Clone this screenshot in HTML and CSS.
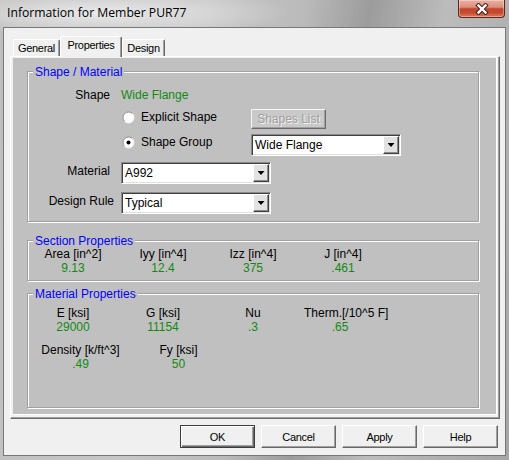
FILE: index.html
```html
<!DOCTYPE html>
<html>
<head>
<meta charset="utf-8">
<title>Information for Member PUR77</title>
<link rel="stylesheet" href="styles.css">
</head>
<body>
<div class="window">
  <div class="titlebar">
    <div class="caption">Information for Member PUR77</div>
    <div class="close">
      <svg width="14" height="12" viewBox="0 0 14 12">
        <path d="M3.5 2.5 L10.5 9.5 M10.5 2.5 L3.5 9.5" stroke="#3b2320" stroke-width="4.4" stroke-linecap="square" fill="none"/>
        <path d="M3.5 2.5 L10.5 9.5 M10.5 2.5 L3.5 9.5" stroke="#ffffff" stroke-width="2.4" stroke-linecap="square" fill="none"/>
      </svg>
    </div>
  </div>
  <div class="client">
    <div class="tabs">
      <div class="tab t-general">General</div>
      <div class="tab t-props active">Properties</div>
      <div class="tab t-design">Design</div>
    </div>
    <div class="panel">
      <div class="page">
        <div class="group g-shape">
          <span class="legend">Shape / Material</span>
          <div class="row r-shape">
            <span class="lbl">Shape</span>
            <span class="val">Wide Flange</span>
          </div>
          <div class="row r-explicit">
            <div class="opt">
              <svg class="radio" width="13" height="13" viewBox="0 0 13 13">
                <circle cx="6.5" cy="6.5" r="5.5" fill="#fff"/>
                <path d="M2.61 10.39 A5.5 5.5 0 0 1 10.39 2.61" stroke="#8c8c8c" fill="none"/>
                <path d="M10.39 2.61 A5.5 5.5 0 0 1 2.61 10.39" stroke="#f4f4f4" fill="none"/>
              </svg>
              <span>Explicit Shape</span>
            </div>
            <button class="btn-dis" type="button">Shapes List</button>
          </div>
          <div class="row r-group">
            <div class="opt">
              <svg class="radio" width="13" height="13" viewBox="0 0 13 13">
                <circle cx="6.5" cy="6.5" r="5.5" fill="#fff"/>
                <path d="M2.61 10.39 A5.5 5.5 0 0 1 10.39 2.61" stroke="#8c8c8c" fill="none"/>
                <path d="M10.39 2.61 A5.5 5.5 0 0 1 2.61 10.39" stroke="#f4f4f4" fill="none"/>
                <circle cx="6.5" cy="6.5" r="2" fill="#000"/>
              </svg>
              <span>Shape Group</span>
            </div>
            <div class="combo">
              <span class="ctext">Wide Flange</span>
              <span class="ddbtn"></span>
            </div>
          </div>
          <div class="row r-material">
            <span class="lbl">Material</span>
            <div class="combo">
              <span class="ctext">A992</span>
              <span class="ddbtn"></span>
            </div>
          </div>
          <div class="row r-rule">
            <span class="lbl wide">Design Rule</span>
            <div class="combo">
              <span class="ctext">Typical</span>
              <span class="ddbtn"></span>
            </div>
          </div>
        </div>

        <div class="group g-sect">
          <span class="legend">Section Properties</span>
          <div class="props p-sect">
            <div class="cell"><div class="plbl">Area [in^2]</div><div class="pval">9.13</div></div>
            <div class="cell"><div class="plbl">Iyy [in^4]</div><div class="pval">12.4</div></div>
            <div class="cell"><div class="plbl">Izz [in^4]</div><div class="pval">375</div></div>
            <div class="cell"><div class="plbl">J [in^4]</div><div class="pval">.461</div></div>
          </div>
        </div>

        <div class="group g-mat">
          <span class="legend">Material Properties</span>
          <div class="props p-mat1">
            <div class="cell"><div class="plbl">E [ksi]</div><div class="pval">29000</div></div>
            <div class="cell"><div class="plbl">G [ksi]</div><div class="pval">11154</div></div>
            <div class="cell"><div class="plbl">Nu</div><div class="pval">.3</div></div>
            <div class="cell therm"><div class="plbl">Therm.[/10^5 F]</div><div class="pval">.65</div></div>
          </div>
          <div class="props p-mat2">
            <div class="cell"><div class="plbl">Density [k/ft^3]</div><div class="pval">.49</div></div>
            <div class="cell"><div class="plbl">Fy [ksi]</div><div class="pval">50</div></div>
          </div>
        </div>
      </div>
    </div>
    <div class="buttons">
      <button class="btn default" type="button">OK</button>
      <button class="btn" type="button">Cancel</button>
      <button class="btn" type="button">Apply</button>
      <button class="btn" type="button">Help</button>
    </div>
  </div>
</div>
</body>
</html>
```

FILE: styles.css
```css
* { box-sizing: border-box; }

body {
  margin: 0;
  font-family: "Liberation Sans", Arial, sans-serif;
  font-size: 12px;
  color: #000;
}

.window {
  width: 509px;
  height: 460px;
  display: flex;
  flex-direction: column;
  overflow: hidden;
  background:
    radial-gradient(ellipse 190px 24px at 100px 13px, rgba(236,236,236,0.95), rgba(236,236,236,0)),
    linear-gradient(100deg, #bdbdbd 0%, #c7c7c7 35%, #bababa 52%, #9c9c9c 63%, #bcbcbc 76%, #b0b0b0 88%, #a6a6a6 100%);
}

.titlebar {
  flex: none;
  height: 27px;
  display: flex;
  justify-content: space-between;
  align-items: flex-start;
}

.caption {
  font-family: "Open Sans", "Noto Sans", sans-serif;
  font-size: 12.2px;
  line-height: 14px;
  margin: 6px 0 0 7px;
  color: #000;
  white-space: nowrap;
}

.close {
  width: 47px;
  height: 18px;
  margin-right: 4px;
  border: 1px solid #5e261b;
  border-top: none;
  border-radius: 0 0 4px 4px;
  background: linear-gradient(#eab0a2 0%, #dc8f7c 42%, #c4442a 52%, #c54a31 74%, #e0795c 100%);
  box-shadow: inset 0 0 0 1px rgba(255,255,255,0.35);
  display: flex;
  align-items: center;
  justify-content: center;
}

.client {
  flex: none;
  height: 429px;
  margin: 0 3px;
  border: 1px solid #787878;
  background: #f0f0f0;
  padding: 8px 0 0 6px;
}

/* tabs */
.tabs {
  position: relative;
  z-index: 1;
  display: flex;
  align-items: flex-end;
  height: 20px;
  padding-left: 3px;
}

.tab {
  height: 17px;
  padding-top: 1px;
  line-height: 15px;
  font-size: 11px;
  letter-spacing: -0.3px;
  text-align: center;
  background: #f0f0f0;
  border-top: 1px solid #fff;
  border-left: 1px solid #fff;
  border-right: 1px solid #696969;
  border-radius: 2px 2px 0 0;
  box-shadow: inset -1px 0 0 #a0a0a0;
  white-space: nowrap;
}

.t-general { width: 47px; }
.t-props { width: 62px; }
.t-design { width: 43px; }

.tab.active {
  height: 21px;
  margin-bottom: -1px;
}

.panel {
  width: 490px;
  height: 363px;
  border-style: solid;
  border-width: 1px;
  border-color: #fff #696969 #696969 #fff;
  box-shadow: inset -1px -1px 0 #a0a0a0;
  padding: 1px 2px 3px 2px;
}

.page {
  height: 357px;
  background: #c0c0c0;
  border-right: 1px solid #fff;
  border-bottom: 1px solid #fff;
  padding: 13px 0 0 14px;
}

/* group boxes */
.group {
  position: relative;
  width: 452px;
  border: 1px solid #a0a0a0;
  box-shadow: inset 1px 1px 0 #fff, 1px 1px 0 #fff;
}

.g-shape { height: 151px; }
.g-sect { height: 41px; margin-top: 18px; }
.g-mat { height: 115px; margin-top: 12px; }

.legend {
  position: absolute;
  left: 5px;
  top: -7px;
  padding: 0 2px;
  line-height: 14px;
  background: #c0c0c0;
  color: #0000ff;
  white-space: nowrap;
}

.row {
  display: flex;
  align-items: flex-start;
  line-height: 14px;
}

.lbl {
  width: 82px;
  margin-right: 11px;
  text-align: right;
  white-space: nowrap;
}

.lbl.wide {
  width: 86px;
  margin-right: 7px;
}

.val { color: #128a12; }

.r-shape { margin-top: 16px; height: 14px; }
.r-explicit { margin-top: 7px; height: 20px; }
.r-group { margin-top: 5px; height: 22px; }
.r-material { margin-top: 6px; height: 22px; }
.r-rule { margin-top: 8px; height: 22px; }

.r-material .lbl,
.r-rule .lbl { margin-top: 2px; }

.opt {
  width: 130px;
  margin-left: 93px;
  margin-top: 1px;
  padding-left: 1px;
  height: 14px;
  display: flex;
  align-items: center;
  gap: 6px;
  white-space: nowrap;
}

.radio { flex: none; display: block; }

.btn-dis {
  appearance: none;
  width: 75px;
  height: 20px;
  padding: 0;
  margin: 0;
  font-family: inherit;
  font-size: 12px;
  background: #c9c9c9;
  border: 1px solid;
  border-color: #f4f4f4 #696969 #696969 #f4f4f4;
  box-shadow: inset -1px -1px 0 #a0a0a0;
  color: #a0a0a0;
  text-shadow: 1px 1px 0 #f4f4f4;
}

.combo {
  width: 150px;
  height: 22px;
  display: flex;
  background: #fff;
  border: 1px solid;
  border-color: #8a8a8a #fff #fff #8a8a8a;
  box-shadow: inset 1px 1px 0 #404040, inset -1px -1px 0 #e0e0e0;
  padding: 1px;
}

.ctext {
  flex: 1;
  padding-left: 2px;
  line-height: 18px;
  white-space: nowrap;
}

.ddbtn {
  width: 16px;
  height: 18px;
  flex: none;
  background: #e2e2e2;
  border: 1px solid;
  border-color: #fff #404040 #404040 #fff;
  box-shadow: inset -1px -1px 0 #8a8a8a;
  display: flex;
  align-items: center;
  justify-content: center;
}

.ddbtn::after {
  content: "";
  width: 7px;
  height: 4px;
  background: #000;
  clip-path: polygon(0 0, 100% 0, 50% 100%);
}

/* property grids */
.props {
  display: grid;
  line-height: 14px;
  text-align: center;
  white-space: nowrap;
}

.p-sect { grid-template-columns: repeat(4, 90px); margin-top: 6px; }
.p-mat1 { grid-template-columns: repeat(4, 90px); margin-top: 12px; }
.p-mat2 { grid-template-columns: 105px 91px; margin-top: 9px; }

.pval { color: #128a12; }

.therm .plbl { padding-left: 6px; }
.therm .pval { padding-right: 6px; }

/* dialog buttons */
.buttons {
  display: flex;
  justify-content: flex-end;
  gap: 6px;
  margin-top: 6px;
  margin-right: 7px;
}

.btn {
  appearance: none;
  width: 75px;
  height: 23px;
  padding: 0;
  margin: 0;
  font-family: inherit;
  font-size: 11px;
  letter-spacing: -0.3px;
  color: #000;
  background: #f0f0f0;
  border: 1px solid;
  border-color: #fff #696969 #696969 #fff;
  box-shadow: inset -1px -1px 0 #a0a0a0;
}

.btn.default {
  border: 1px solid #3c3c3c;
  box-shadow: inset 1px 1px 0 #fff, inset -1px -1px 0 #696969, inset -2px -2px 0 #a0a0a0;
}
```
